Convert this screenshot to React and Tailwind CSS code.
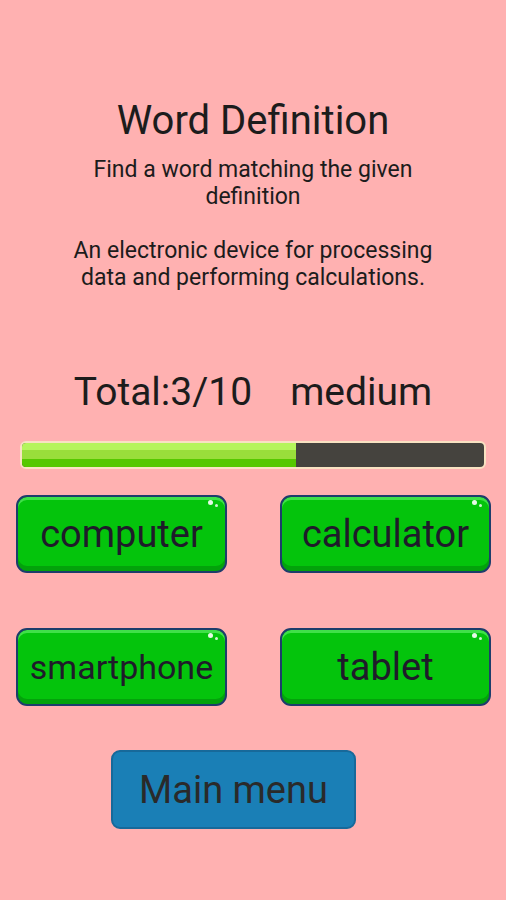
import React from "react";

function GreenButton({ label, size = "text-[38px]" }) {
  return (
    <div className="relative w-[211px] h-[78px] rounded-[11px] border-2 border-[#1d3d6b] bg-[#04c40c] shadow-[inset_0_-5px_0_#03a20b,inset_0_3px_0_#3fe048] flex items-center justify-center">
      <span className={`${size} leading-none text-[#1f1b2a]`}>{label}</span>
      <span className="absolute top-[3px] right-[12px] w-[5px] h-[5px] rounded-full bg-white/90" />
      <span className="absolute top-[7px] right-[7px] w-[3px] h-[3px] rounded-full bg-white/80" />
    </div>
  );
}

export default function App() {
  return (
    <div
      className="w-[506px] min-h-[900px] bg-[#ffb1b1] flex flex-col text-[#1c1c1c]"
      style={{ fontFamily: "Roboto, 'Liberation Sans', sans-serif" }}
    >
      <div className="mt-[98px] text-center text-[40px] leading-[46px]">Word Definition</div>
      <div className="mt-[12px] text-center text-[23px] leading-[27px] px-[60px]">
        Find a word matching the given definition
      </div>
      <div className="mt-[27px] text-center text-[23px] leading-[27px] px-[60px]">
        An electronic device for processing data and performing calculations.
      </div>
      <div className="mt-[78px] flex justify-center gap-[38px] text-[39px] leading-[46px]">
        <span>Total:3/10</span>
        <span>medium</span>
      </div>
      <div className="mt-[26px] mx-[20px] h-[28px] rounded-[6px] border-2 border-[#f8e2c2] bg-[#45433e] overflow-hidden flex">
        <div className="w-[274px] h-full bg-[linear-gradient(to_bottom,#b5f55c_0%,#b5f55c_28%,#99de3b_28%,#99de3b_68%,#55c800_68%,#55c800_100%)]" />
      </div>
      <div className="mt-[26px] ml-[16px] flex gap-[53px]">
        <GreenButton label="computer" />
        <GreenButton label="calculator" />
      </div>
      <div className="mt-[55px] ml-[16px] flex gap-[53px]">
        <GreenButton label="smartphone" size="text-[34px]" />
        <GreenButton label="tablet" />
      </div>
      <div className="mt-[44px] ml-[111px] w-[245px] h-[79px] rounded-[9px] border-2 border-[#17699a] bg-[#1a7fb6] flex items-center justify-center">
        <span className="text-[38px] leading-none text-[#2a2a2a]">Main menu</span>
      </div>
    </div>
  );
}
